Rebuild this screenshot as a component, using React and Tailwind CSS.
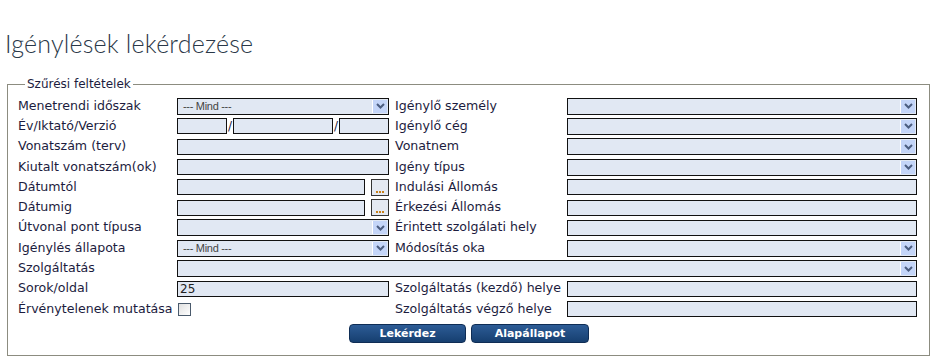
import React from 'react';

const Arrow = () => (
    <span className="absolute right-[1px] top-[1px] bottom-[1px] w-[15px] bg-[#c4d5f8] border-l border-white flex items-center justify-center">
        <svg width="9" height="6" viewBox="0 0 9 6">
            <path d="M1 1 L4.5 4.5 L8 1" fill="none" stroke="#4b5d80" strokeWidth="2" />
        </svg>
    </span>
);

const Select = ({ value = '', w = 'w-[212px]' }) => (
    <div className={`relative h-[17px] ${w} bg-[#e1e8f3] border border-[#111] font-['Liberation_Sans',sans-serif] text-[11px] text-[#444] leading-[15px] pl-[5px] tracking-[-0.3px]`}>
        {value}
        <Arrow />
    </div>
);

const Input = ({ value = '', w = 'w-[212px]' }) => (
    <div className={`h-[16px] ${w} bg-[#e1e8f3] border border-[#111] text-[12px] leading-[14px] pl-[2px] text-[#222]`}>{value}</div>
);

const DateField = () => (
    <div className="flex items-center w-[212px]">
        <Input w="w-[188px]" />
        <div className="ml-[6px] h-[17px] w-[18px] bg-[#e4e9f2] border border-[#333] flex items-end justify-center pb-[2px] gap-[1px]">
            <span className="w-[2px] h-[2px] bg-[#c8801a]" />
            <span className="w-[2px] h-[2px] bg-[#c8801a]" />
            <span className="w-[2px] h-[2px] bg-[#c8801a]" />
        </div>
    </div>
);

const Row = ({ children }) => <div className="contents">{children}</div>;

const Label = ({ children }) => <div className="h-[20.3px] flex items-center whitespace-nowrap">{children}</div>;
const Cell = ({ children, span }) => <div className={`h-[20.3px] flex items-center ${span ? 'col-span-4' : ''}`}>{children}</div>;

export default function App() {
    return (
        <div className="w-[935px] h-[361px] bg-white font-['DejaVu_Sans',sans-serif] text-[#1c1c3e] overflow-hidden">
            <h1 className="pl-[5px] pt-[28px] font-['Lato',sans-serif] font-light text-[25px] leading-[30px] text-[#2a3848] tracking-[0.2px]">
                Igénylések lekérdezése
            </h1>
            <fieldset className="mt-[18px] ml-[7px] w-[923px] border border-[#8c8c80] pl-[10px] pr-[10px] pb-[12px]">
                <legend className="ml-[7px] px-[2px] text-[12px] leading-[16px]">Szűrési feltételek</legend>
                <div className="grid grid-cols-[159px_212px_6px_172px_350px] text-[12.6px] pt-[4px]">
                    <Row>
                        <Label>Menetrendi időszak</Label>
                        <Cell><Select value="--- Mind ---" /></Cell>
                        <div />
                        <Label>Igénylő személy</Label>
                        <Cell><Select w="w-[350px]" /></Cell>
                    </Row>
                    <Row>
                        <Label>Év/Iktató/Verzió</Label>
                        <Cell>
                            <div className="flex items-center w-[212px] text-[12px]">
                                <Input w="w-[50px]" />
                                <span className="w-[6px] text-center">/</span>
                                <Input w="w-[100px]" />
                                <span className="w-[6px] text-center">/</span>
                                <Input w="w-[50px]" />
                            </div>
                        </Cell>
                        <div />
                        <Label>Igénylő cég</Label>
                        <Cell><Select w="w-[350px]" /></Cell>
                    </Row>
                    <Row>
                        <Label>Vonatszám (terv)</Label>
                        <Cell><Input /></Cell>
                        <div />
                        <Label>Vonatnem</Label>
                        <Cell><Select w="w-[350px]" /></Cell>
                    </Row>
                    <Row>
                        <Label>Kiutalt vonatszám(ok)</Label>
                        <Cell><Input /></Cell>
                        <div />
                        <Label>Igény típus</Label>
                        <Cell><Select w="w-[350px]" /></Cell>
                    </Row>
                    <Row>
                        <Label>Dátumtól</Label>
                        <Cell><DateField /></Cell>
                        <div />
                        <Label>Indulási Állomás</Label>
                        <Cell><Input w="w-[350px]" /></Cell>
                    </Row>
                    <Row>
                        <Label>Dátumig</Label>
                        <Cell><DateField /></Cell>
                        <div />
                        <Label>Érkezési Állomás</Label>
                        <Cell><Input w="w-[350px]" /></Cell>
                    </Row>
                    <Row>
                        <Label>Útvonal pont típusa</Label>
                        <Cell><Select /></Cell>
                        <div />
                        <Label>Érintett szolgálati hely</Label>
                        <Cell><Input w="w-[350px]" /></Cell>
                    </Row>
                    <Row>
                        <Label>Igénylés állapota</Label>
                        <Cell><Select value="--- Mind ---" /></Cell>
                        <div />
                        <Label>Módosítás oka</Label>
                        <Cell><Select w="w-[350px]" /></Cell>
                    </Row>
                    <Row>
                        <Label>Szolgáltatás</Label>
                        <Cell span><Select w="w-[740px]" /></Cell>
                    </Row>
                    <Row>
                        <Label>Sorok/oldal</Label>
                        <Cell><Input value="25" /></Cell>
                        <div />
                        <Label>Szolgáltatás (kezdő) helye</Label>
                        <Cell><Input w="w-[350px]" /></Cell>
                    </Row>
                    <Row>
                        <Label>Érvénytelenek mutatása</Label>
                        <Cell>
                            <span className="ml-[1px] w-[13px] h-[13px] border border-[#4a5a6c] bg-gradient-to-br from-[#e0e0e0] to-white" />
                        </Cell>
                        <div />
                        <Label>Szolgáltatás végző helye</Label>
                        <Cell><Input w="w-[350px]" /></Cell>
                    </Row>
                </div>
                <div className="flex justify-center gap-[5px] mt-[5px] pl-[1px]">
                    <button className="w-[117px] h-[19px] rounded-[4px] bg-gradient-to-b from-[#2d5c96] to-[#163f70] border border-[#0f2d55] text-white font-bold text-[11px] leading-[17px]">
                        Lekérdez
                    </button>
                    <button className="w-[118px] h-[19px] rounded-[4px] bg-gradient-to-b from-[#2d5c96] to-[#163f70] border border-[#0f2d55] text-white font-bold text-[11px] leading-[17px]">
                        Alapállapot
                    </button>
                </div>
            </fieldset>
        </div>
    );
}
